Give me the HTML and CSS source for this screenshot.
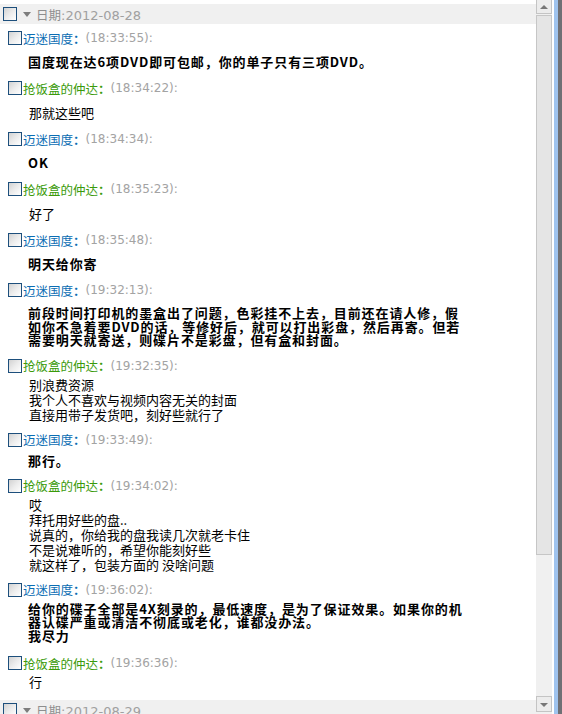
FILE: index.html
```html
<!DOCTYPE html>
<html lang="zh-CN">
<head>
    <meta charset="UTF-8">
    <title>聊天记录</title>
    <link rel="stylesheet" href="styles.css">
</head>
<body>
    <div class="window">
        <div class="pane">
            <div class="day">
                <span class="box"></span>
                <span class="caret"></span>
                <span class="date"><span class="cn">日期</span>:2012-08-28</span>
            </div>

            <div class="msg">
                <div class="who"><span class="box"></span><span class="name blue">迈迷国度<b>：</b></span><span class="time">(18:33:55):</span></div>
                <div class="say">国度现在达6项DVD即可包邮，你的单子只有三项DVD。</div>
            </div>
            <div class="msg">
                <div class="who"><span class="box"></span><span class="name green">抢饭盒的仲达<b>：</b></span><span class="time">(18:34:22):</span></div>
                <div class="chat one">那就这些吧</div>
            </div>
            <div class="msg">
                <div class="who"><span class="box"></span><span class="name blue">迈迷国度<b>：</b></span><span class="time">(18:34:34):</span></div>
                <div class="say">OK</div>
            </div>
            <div class="msg">
                <div class="who"><span class="box"></span><span class="name green">抢饭盒的仲达<b>：</b></span><span class="time">(18:35:23):</span></div>
                <div class="chat one">好了</div>
            </div>
            <div class="msg">
                <div class="who"><span class="box"></span><span class="name blue">迈迷国度<b>：</b></span><span class="time">(18:35:48):</span></div>
                <div class="say">明天给你寄</div>
            </div>
            <div class="msg">
                <div class="who"><span class="box"></span><span class="name blue">迈迷国度<b>：</b></span><span class="time">(19:32:13):</span></div>
                <div class="say many">前段时间打印机的墨盒出了问题，色彩挂不上去，目前还在请人修，假如你不急着要DVD的话，等修好后，就可以打出彩盘，然后再寄。但若需要明天就寄送，则碟片不是彩盘，但有盒和封面。</div>
            </div>
            <div class="msg">
                <div class="who"><span class="box"></span><span class="name green">抢饭盒的仲达<b>：</b></span><span class="time">(19:32:35):</span></div>
                <div class="chat">别浪费资源<br>我个人不喜欢与视频内容无关的封面<br>直接用带子发货吧，刻好些就行了</div>
            </div>
            <div class="msg">
                <div class="who"><span class="box"></span><span class="name blue">迈迷国度<b>：</b></span><span class="time">(19:33:49):</span></div>
                <div class="say short">那行。</div>
            </div>
            <div class="msg">
                <div class="who"><span class="box"></span><span class="name green">抢饭盒的仲达<b>：</b></span><span class="time">(19:34:02):</span></div>
                <div class="chat">哎<br>拜托用好些的盘..<br>说真的，你给我的盘我读几次就老卡住<br>不是说难听的，希望你能刻好些<br>就这样了，包装方面的 没啥问题</div>
            </div>
            <div class="msg">
                <div class="who"><span class="box"></span><span class="name blue">迈迷国度<b>：</b></span><span class="time">(19:36:02):</span></div>
                <div class="say many tail">给你的碟子全部是4X刻录的，最低速度，是为了保证效果。如果你的机器认碟严重或清洁不彻底或老化，谁都没办法。<br>我尽力</div>
            </div>
            <div class="msg">
                <div class="who"><span class="box"></span><span class="name green">抢饭盒的仲达<b>：</b></span><span class="time">(19:36:36):</span></div>
                <div class="chat last">行</div>
            </div>

            <div class="day">
                <span class="box"></span>
                <span class="caret"></span>
                <span class="date"><span class="cn">日期</span>:2012-08-29</span>
            </div>
        </div>

        <div class="scroll">
            <div class="arrow up"></div>
            <div class="thumb"></div>
            <div class="track"></div>
            <div class="arrow down"></div>
        </div>
        <div class="frame"></div>
    </div>
</body>
</html>
```

FILE: styles.css
```css
html, body {
    margin: 0;
    padding: 0;
    height: 714px;
    overflow: hidden;
    background-color: #ffffff;
}
.window {
    display: flex;
    height: 714px;
    font-family: "Noto Sans CJK SC", sans-serif;
}
.pane {
    width: 536px;
    padding-top: 4px;
    overflow: hidden;
}

/* date bar */
.day {
    display: flex;
    align-items: center;
    height: 20px;
    padding-left: 3px;
    margin-bottom: 6px;
    background-color: #f0f0f0;
}
.caret {
    width: 0;
    height: 0;
    margin: 0 5px 0 6px;
    border-left: 4px solid transparent;
    border-right: 4px solid transparent;
    border-top: 5px solid #7d7d7d;
}
.date {
    font-family: "DejaVu Sans", sans-serif;
    font-size: 13px;
    color: #a0a0a0;
}
.date .cn {
    font-family: "Noto Sans CJK SC", sans-serif;
    font-size: 12.5px;
    color: #8e8e8e;
}

/* checkbox */
.box {
    display: inline-block;
    width: 12px;
    height: 12px;
    flex: none;
    border: 1px solid #1d4f7c;
    background: linear-gradient(135deg, #d2d2d2 0%, #ececec 50%, #ffffff 100%);
}

/* messages */
.who {
    display: flex;
    align-items: center;
    height: 16px;
    padding-left: 8px;
    font-size: 12.5px;
    white-space: nowrap;
}
.name {
    margin-left: 1px;
}
.name b {
    font-weight: 700;
}
.blue { color: #0b6db3; }
.green { color: #3a9a0a; }
.time {
    font-family: "DejaVu Sans", sans-serif;
    font-size: 12px;
    color: #a3a3a3;
}
.say {
    padding: 9px 70px 11px 28px;
    font-size: 13px;
    font-weight: 700;
    line-height: 14px;
    letter-spacing: 0.9px;
    color: #000000;
}
.say.many {
    padding-top: 8px;
    line-height: 13.5px;
}
.say.short {
    padding-top: 6px;
    padding-bottom: 10px;
}
.say.tail {
    padding-top: 4px;
    padding-bottom: 13px;
}
.chat {
    padding: 3px 20px 10px 29px;
    font-size: 13px;
    line-height: 15px;
    color: #000000;
}
.chat.one {
    padding-top: 9px;
    padding-bottom: 11px;
}
.chat.last {
    padding-bottom: 11px;
}

/* scrollbar */
.scroll {
    display: flex;
    flex-direction: column;
    width: 16px;
    background-color: #f0f0f0;
}
.arrow {
    position: relative;
    height: 14px;
    box-sizing: border-box;
    border: 1px solid #c4c4c4;
    background-color: #ececec;
}
.arrow.up {
    height: 15px;
    margin-top: -1px;
}
.arrow.down {
    height: 16px;
    margin-bottom: 2px;
}
.arrow::after {
    content: "";
    position: absolute;
    left: 3px;
    top: 4px;
    border-left: 4px solid transparent;
    border-right: 4px solid transparent;
}
.arrow.up::after {
    top: 5px;
    border-bottom: 4px solid #777777;
}
.arrow.down::after {
    top: 6px;
    border-top: 4px solid #777777;
}
.thumb {
    height: 540px;
    box-sizing: border-box;
    margin-top: 1px;
    border: 1px solid #c6c6c6;
    background-color: #e5e5e5;
}
.track {
    flex: 1;
}
.frame {
    width: 10px;
    background: linear-gradient(90deg, #ffffff 0, #ffffff 2px, #9fc3ee 2px, #9fc3ee 6px, #6f7075 6px);
}
```
